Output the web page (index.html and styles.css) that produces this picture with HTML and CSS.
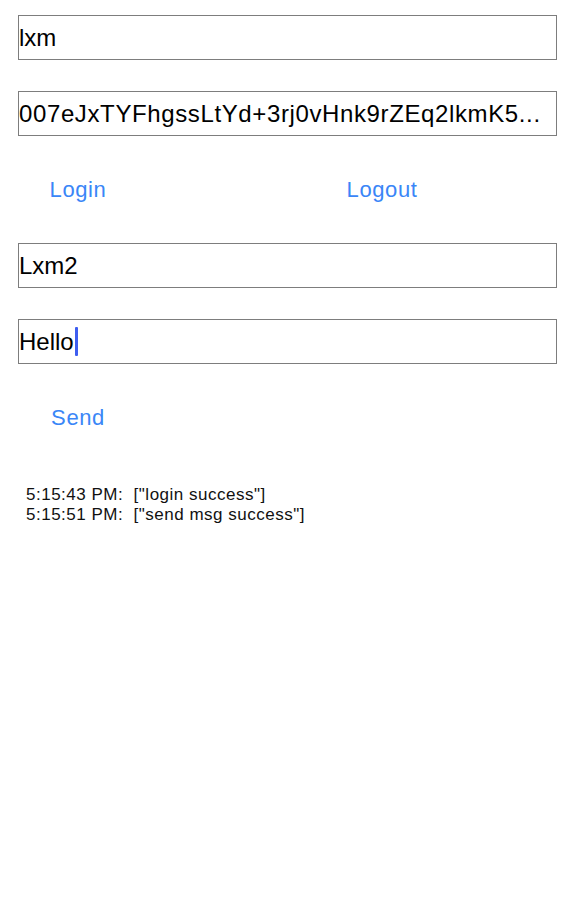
FILE: index.html
```html
<!DOCTYPE html>
<html>
<head>
<meta charset="utf-8">
<link rel="stylesheet" href="styles.css">
</head>
<body>
<div class="app">
  <div class="field"><span class="val">lxm</span></div>
  <div class="field"><span class="val val-long">007eJxTYFhgssLtYd+3rj0vHnk9rZEq2lkmK5...</span></div>
  <div class="btnrow">
    <div class="btn">Login</div>
    <div class="btn btn-right">Logout</div>
  </div>
  <div class="field"><span class="val">Lxm2</span></div>
  <div class="field"><span class="val">Hello</span><span class="caret"></span></div>
  <div class="btnrow">
    <div class="btn">Send</div>
  </div>
  <div class="log">
    <div class="line">5:15:43 PM:  ["login success"]</div>
    <div class="line">5:15:51 PM:  ["send msg success"]</div>
  </div>
</div>
</body>
</html>
```

FILE: styles.css
```css
html, body {
  margin: 0;
  padding: 0;
  background: #ffffff;
}
body {
  width: 574px;
  height: 902px;
  font-family: "Liberation Sans", Arial, sans-serif;
}
.app {
  padding: 15px 17px 0 18px;
  display: flex;
  flex-direction: column;
}
.field {
  height: 45px;
  box-sizing: border-box;
  border: 1px solid #7d7d7d;
  margin-bottom: 31px;
  display: flex;
  align-items: center;
  font-size: 24px;
  color: #000;
  padding: 0;
}
.val {
  white-space: nowrap;
}
.val-long {
  letter-spacing: 0.62px;
}
.caret {
  display: inline-block;
  width: 3px;
  height: 29px;
  background: #3e5ef0;
  border-radius: 1px;
  margin-left: 1px;
  flex: none;
}
.btnrow {
  height: 45px;
  margin-bottom: 31px;
  display: flex;
  align-items: center;
}
.btn {
  width: 120px;
  text-align: center;
  font-size: 22px;
  letter-spacing: 0.6px;
  color: #3a86f7;
}
.btn-right {
  margin-left: 184px;
}
.log {
  margin-top: 14px;
  padding-left: 8px;
  font-size: 17px;
  letter-spacing: 0.5px;
  line-height: 20px;
  color: #111;
}
.line {
  white-space: pre;
}
```
